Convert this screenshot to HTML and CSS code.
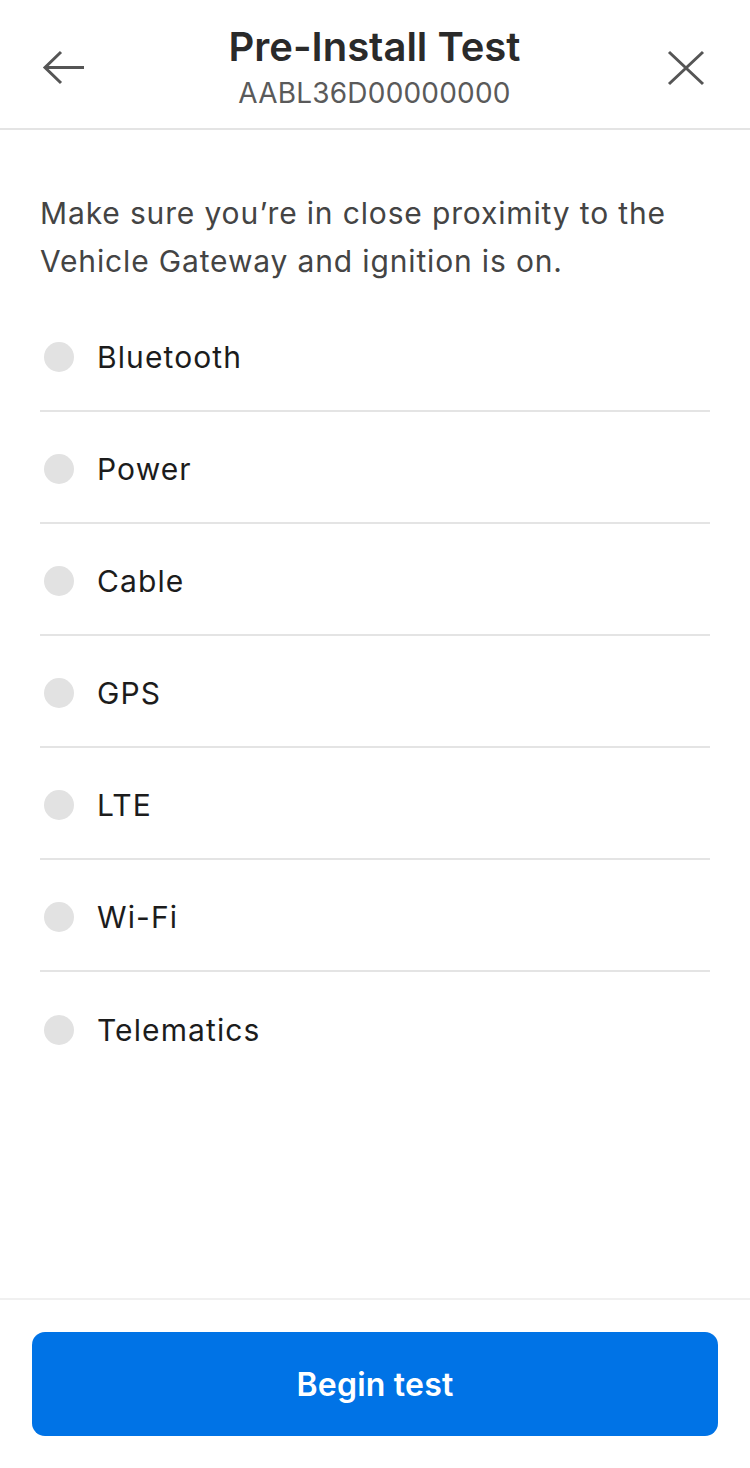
FILE: index.html
```html
<!DOCTYPE html>
<html>
<head>
  <meta charset="UTF-8">
  <title>Pre-Install Test</title>
  <link rel="stylesheet" href="styles.css">
</head>
<body>
  <div class="screen">
    <div class="header">
      <button class="header__btn" aria-label="Back">
        <svg width="44" height="44" viewBox="0 0 44 44" fill="none" stroke="#555" stroke-width="3">
          <path d="M42 22.5H3M19 7L3 22.5 19 38"/>
        </svg>
      </button>
      <div class="header__title">
        <h1>Pre-Install Test</h1>
        <p>AABL36D00000000</p>
      </div>
      <button class="header__btn" aria-label="Close">
        <svg width="44" height="44" viewBox="0 0 44 44" fill="none" stroke="#555" stroke-width="3">
          <path d="M6 7l34 32M40 7L6 39"/>
        </svg>
      </button>
    </div>

    <div class="content">
      <p class="intro">Make sure you’re in close proximity to the Vehicle Gateway and ignition is on.</p>
      <ul class="checks">
        <li><span class="dot"></span>Bluetooth</li>
        <li><span class="dot"></span>Power</li>
        <li><span class="dot"></span>Cable</li>
        <li><span class="dot"></span>GPS</li>
        <li><span class="dot"></span>LTE</li>
        <li><span class="dot"></span>Wi-Fi</li>
        <li><span class="dot"></span>Telematics</li>
      </ul>
    </div>

    <div class="footer">
      <button class="btn-primary">Begin test</button>
    </div>
  </div>
</body>
</html>
```

FILE: styles.css
```css
/* Pre-install test screen */
body {
  margin: 0;
  background: #fff;
  font-family: Inter, "Noto Sans", sans-serif;
}

.screen {
  height: 1468px;
  display: flex;
  flex-direction: column;
}

.header {
  height: 130px;
  border-bottom: 2px solid #e4e4e4;
  display: flex;
  align-items: center;
  justify-content: space-between;
  padding: 0 43px 0 42px;
  box-sizing: border-box;
  flex-shrink: 0;
}

.header__btn {
  width: 44px;
  height: 44px;
  padding: 0;
  border: none;
  background: none;
  margin-top: 6px;
}

.header__title {
  text-align: center;
  align-self: flex-start;
  padding-top: 23px;
}

.header__title h1 {
  margin: 0;
  font-size: 40px;
  line-height: 48px;
  font-weight: 600;
  color: #2a2a2a;
}

.header__title p {
  margin: 5px 0 0;
  font-size: 28px;
  line-height: 34px;
  color: #5a5a5a;
  letter-spacing: 0.2px;
}

.content {
  flex: 1;
  padding: 0 40px;
}

.intro {
  margin: 59px 0 0;
  font-size: 30px;
  line-height: 48px;
  color: #444;
  letter-spacing: 0.85px;
}

.checks {
  list-style: none;
  margin: 15px 0 0;
  padding: 0;
}

.checks li {
  height: 112px;
  display: flex;
  align-items: center;
  border-bottom: 2px solid #e4e4e4;
  font-size: 30px;
  color: #1c1c1c;
  letter-spacing: 1.1px;
  padding-top: 4px;
  box-sizing: border-box;
}

.checks li:last-child {
  border-bottom: none;
}

.dot {
  width: 30px;
  height: 30px;
  border-radius: 50%;
  background: #e2e2e2;
  margin: 0 23px 0 4px;
}

.footer {
  border-top: 2px solid #f0f0f0;
  padding: 32px;
  flex-shrink: 0;
}

.btn-primary {
  display: block;
  width: 100%;
  height: 104px;
  border: none;
  border-radius: 13px;
  background: #0073e6;
  color: #fff;
  font-family: Inter, "Noto Sans", sans-serif;
  font-size: 32px;
  font-weight: 600;
  letter-spacing: 0.2px;
}
```
